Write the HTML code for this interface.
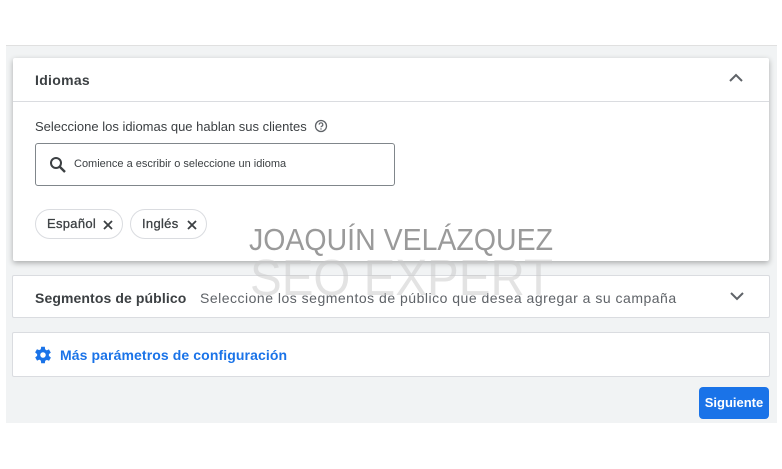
<!DOCTYPE html>
<html><head><meta charset="utf-8"><style>
*{box-sizing:border-box;margin:0;padding:0}
body{width:782px;height:469px;background:#fff;font-family:"Liberation Sans",sans-serif;position:relative;overflow:hidden}
.bg{position:absolute;left:6px;top:45px;width:771px;height:378px;background:#f1f3f4;border-top:1px solid #e0e0e0}
.card{position:absolute;background:#fff;border:1px solid #dadce0;border-radius:2px}
.c1{left:13px;top:58px;width:756px;height:203px;box-shadow:0 2px 6px rgba(0,0,0,.3);border:none}
.hdr{height:44px;border-bottom:1px solid #dadce0;position:relative}
.t{position:absolute;font-size:14px;color:#3c4043;white-space:nowrap}
.chip{position:absolute;top:209px;height:30px;border:1px solid #dadce0;border-radius:15px;font-size:13px;color:#3c4043;line-height:28px;padding-left:11px;letter-spacing:.3px;-webkit-text-stroke:.3px #3c4043}
.btn{position:absolute;left:699px;top:387px;width:70px;height:32px;background:#1a73e8;border-radius:4px;color:#fff;font-size:13px;font-weight:bold;text-align:center;line-height:32px}
</style></head><body>
<div class="bg"></div>
<div class="card c1">
 <div class="hdr">
  <div class="t" style="left:22px;top:14px;font-weight:bold;color:#3c4043;letter-spacing:.3px">Idiomas</div>
  <svg style="position:absolute;left:715px;top:14px" width="16" height="12" viewBox="0 0 16 12"><path d="M2 9 L8 3 L14 9" stroke="#5f6368" stroke-width="2" fill="none"/></svg>
 </div>
 <div class="t" style="left:22px;top:61px;font-size:13px">Seleccione los idiomas que hablan sus clientes</div>
 <svg style="position:absolute;left:301px;top:61px" width="14" height="14" viewBox="0 0 14 14"><circle cx="7" cy="7" r="5.5" stroke="#5f6368" stroke-width="1.3" fill="none"/><path d="M5.2 5.6a1.8 1.8 0 1 1 2.4 1.7c-.5.2-.6.5-.6 1" stroke="#5f6368" stroke-width="1.2" fill="none"/><circle cx="7" cy="10" r=".7" fill="#5f6368"/></svg>
 <div style="position:absolute;left:22px;top:85px;width:360px;height:43px;border:1px solid #80868b;border-radius:3px">
  <svg style="position:absolute;left:13px;top:12px" width="18" height="18" viewBox="0 0 18 18"><circle cx="7" cy="7" r="5" stroke="#3c4043" stroke-width="2" fill="none"/><path d="M10.5 10.5 L16 16" stroke="#3c4043" stroke-width="2.4"/></svg>
  <div class="t" style="left:38px;top:14px;font-size:11px">Comience a escribir o seleccione un idioma</div>
 </div>
</div>
<div class="chip" style="left:35px;width:88px">Español<svg style="position:absolute;left:67px;top:10px" width="10" height="10" viewBox="0 0 10 10"><path d="M1 1L9 9M9 1L1 9" stroke="#3c4043" stroke-width="1.8"/></svg></div>
<div class="chip" style="left:130px;width:77px">Inglés<svg style="position:absolute;left:56px;top:10px" width="10" height="10" viewBox="0 0 10 10"><path d="M1 1L9 9M9 1L1 9" stroke="#3c4043" stroke-width="1.8"/></svg></div>
<div class="card" style="left:12px;top:275px;width:758px;height:43px">
 <div class="t" style="left:22px;top:14px;font-weight:bold;color:#3c4043;letter-spacing:.1px">Segmentos de público</div>
 <div class="t" style="left:187px;top:14px;color:#5f6368;letter-spacing:.5px">Seleccione los segmentos de público que desea agregar a su campaña</div>
 <svg style="position:absolute;left:716px;top:14px" width="16" height="12" viewBox="0 0 16 12"><path d="M2 3 L8 9 L14 3" stroke="#5f6368" stroke-width="2" fill="none"/></svg>
</div>
<div class="card" style="left:12px;top:332px;width:758px;height:45px">
 <svg style="position:absolute;left:19px;top:11px" width="22" height="22" viewBox="0 0 24 24"><path fill="#1a73e8" d="M19.4 13a7.6 7.6 0 0 0 0-2l2.1-1.6-2-3.5-2.5 1a7.3 7.3 0 0 0-1.7-1L15 3h-4l-.4 2.7a7.3 7.3 0 0 0-1.7 1l-2.5-1-2 3.5L6.6 11a7.6 7.6 0 0 0 0 2l-2.1 1.6 2 3.5 2.5-1a7.3 7.3 0 0 0 1.7 1L11 21h4l.4-2.7a7.3 7.3 0 0 0 1.7-1l2.5 1 2-3.5zM13 15a3 3 0 1 1 0-6 3 3 0 0 1 0 6z" transform="translate(-1 0)"/></svg>
 <div class="t" style="left:47px;top:14px;color:#1a73e8;font-weight:bold;letter-spacing:.1px">Más parámetros de configuración</div>
</div>
<div class="btn">Siguiente</div>
<svg style="position:absolute;left:0;top:0" width="782" height="469">
 <text x="249" y="250" font-family="Liberation Sans" font-size="31" fill="#9a9a9a" textLength="304" lengthAdjust="spacingAndGlyphs">JOAQUÍN VELÁZQUEZ</text>
 <text x="250" y="295" font-family="Liberation Sans" font-size="51" fill="#c8c8c8" fill-opacity=".5" textLength="303" lengthAdjust="spacingAndGlyphs">SEO EXPERT</text>
</svg>
</body></html>
